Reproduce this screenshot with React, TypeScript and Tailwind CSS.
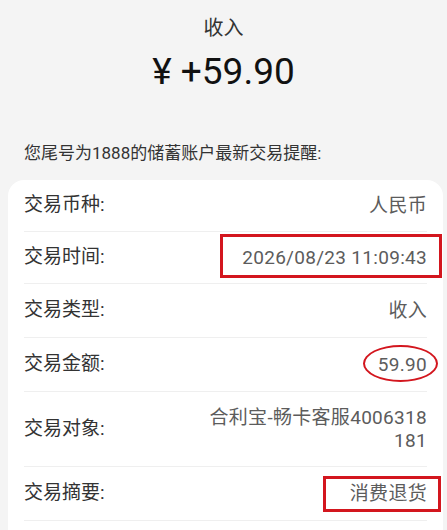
const rows: { label: string; value: string }[] = [
  { label: '交易币种:', value: '人民币' },
  { label: '交易时间:', value: '2026/08/23 11:09:43' },
  { label: '交易类型:', value: '收入' },
  { label: '交易金额:', value: '59.90' },
  { label: '交易对象:', value: '合利宝-畅卡客服4006318181' },
  { label: '交易摘要:', value: '消费退货' },
];

function Mark({ index }: { index: number }) {
  // red hand-drawn style annotations over the screenshot
  if (index === 1)
    return <div className="pointer-events-none absolute top-[2px] bottom-[6px] left-[212px] right-[1px] border-[3px] border-[#d3161e]" />;
  if (index === 3)
    return <div className="pointer-events-none absolute top-[7px] h-[37px] right-[5px] w-[75px] rounded-[50%] border-[2.5px] border-[#d3161e]" />;
  if (index === 5)
    return <div className="pointer-events-none absolute top-[9px] h-[36px] right-[2px] w-[118px] border-[3px] border-[#d3161e]" />;
  return null;
}

export default function App() {
  return (
    <div
      className="min-h-screen w-full bg-[#f4f4f4] overflow-hidden"
      style={{ fontFamily: 'Roboto, "Noto Sans CJK SC", sans-serif' }}
    >
      <div className="pt-[14px] text-center text-[20px] leading-7 text-[#333]">收入</div>
      <div className="mt-2 text-center text-[37px] leading-[44px] text-[#111]">¥ +59.90</div>

      <p className="mt-[47px] px-6 text-[17px] leading-6 text-[#333]">您尾号为1888的储蓄账户最新交易提醒:</p>

      <div className="ml-2 mr-1 mt-[15px] rounded-2xl bg-white pb-6">
        {rows.map((r, i) => (
          <div key={r.label} className="relative px-4">
            <div
              className={`flex items-center justify-between gap-6 border-b border-[#efefef] ${
                i === 4 ? 'h-[75px]' : i < 2 ? 'h-[52px]' : 'h-[54px]'
              }`}
            >
              <span className="shrink-0 text-[19px] text-[#333]">{r.label}</span>
              <span className="max-w-[222px] break-all text-right text-[19px] leading-[23px] tracking-[0.3px] text-[#5c5c5c]">
                {r.value}
              </span>
            </div>
            <Mark index={i} />
          </div>
        ))}
      </div>
    </div>
  );
}
